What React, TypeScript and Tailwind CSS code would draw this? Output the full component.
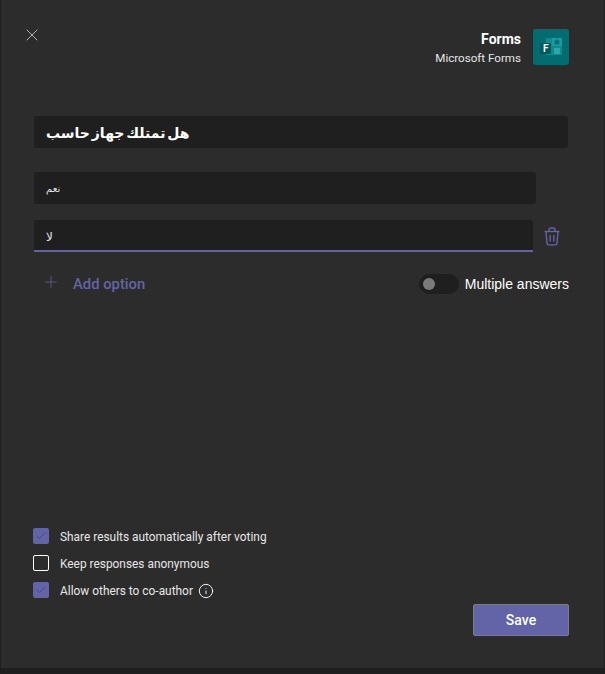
import React from "react";
import { X, Plus, Info, Check } from "lucide-react";

function CheckRow({ checked, label, info }: { checked: boolean; label: string; info?: boolean }) {
  return (
    <div className="flex items-center h-[16px] gap-[11px]">
      {checked ? (
        <div className="w-[16px] h-[16px] rounded-[2px] bg-[#6264a7] flex items-center justify-center">
          <Check size={12} strokeWidth={1.3} className="text-[#3a3b6b]" />
        </div>
      ) : (
        <div className="w-[16px] h-[16px] rounded-[2px] border border-white" />
      )}
      <span className="text-[11.9px] text-[#e6e6e6] font-['Roboto',sans-serif] leading-none pt-[4px]">{label}</span>
      {info && <Info size={16} strokeWidth={1.4} className="text-white -ml-[6px] mt-[1px]" />}
    </div>
  );
}

export default function App() {
  return (
    <div className="w-[605px] h-[674px] bg-[#1f1f1f] overflow-hidden">
      <div className="h-[668px] ml-px mr-px bg-[#2d2c2c] flex flex-col pl-[32px] pr-[35px] font-['Roboto',sans-serif]">
        <header className="flex justify-between items-start pt-[29px] h-[116px]">
          <X size={20} strokeWidth={0.9} className="text-[#e0e0e0] -ml-[11px] -mt-[4px]" />
          <div className="flex gap-[12px]">
            <div className="flex flex-col items-end text-white pt-[2px]">
              <span className="text-[14px] leading-[16px] font-bold">Forms</span>
              <span className="text-[11.6px] leading-[16px] mt-[3px] text-[#e6e6e6]">Microsoft Forms</span>
            </div>
            <div className="w-[36px] h-[36px] rounded-[3px] bg-[#036c70] flex items-center justify-center">
              <svg width="22" height="18" viewBox="0 0 22 18">
                <rect x="6" y="0" width="16" height="17" rx="1" fill="#0f8a8d" />
                <rect x="12" y="0" width="10" height="8" fill="#1c9a9f" />
                <circle cx="17" cy="4" r="2.6" fill="#0b7377" />
                <rect x="14" y="10" width="6" height="6" fill="#2aa9ad" />
                <rect x="0" y="5" width="11" height="11" rx="1" fill="#04585b" />
                <text x="3" y="14" fontSize="10" fontWeight="700" fill="#fff" fontFamily="Roboto, sans-serif">F</text>
              </svg>
            </div>
          </div>
        </header>

        <div className="h-[32px] w-[534px] ml-px rounded-[3px] bg-[#1f1f1f] flex items-center pl-[12px] pt-[2px]">
          <span dir="rtl" className="text-[14px] [word-spacing:-3px] font-bold text-white font-['DejaVu_Sans',sans-serif]">هل تمتلك جهاز حاسب</span>
        </div>

        <div className="h-[32px] w-[502px] ml-px mt-[24px] rounded-[3px] bg-[#1f1f1f] flex items-center pl-[12px]">
          <span dir="rtl" className="text-[10px] text-[#e6e6e6] font-['DejaVu_Sans',sans-serif]">نعم</span>
        </div>

        <div className="flex items-center mt-[16px] ml-px">
          <div className="h-[32px] w-[499px] rounded-t-[3px] bg-[#1f1f1f] border-b-2 border-[#6264a7] flex items-center pl-[12px] pt-[3px]">
            <span dir="rtl" className="text-[12px] text-[#e6e6e6] font-['DejaVu_Sans',sans-serif]">لا</span>
          </div>
          <svg width="18" height="19" viewBox="0 0 18 19" fill="none" stroke="#6264a7" strokeWidth="1.4" className="ml-[10px]">
            <path d="M1.5 4.5h15" />
            <path d="M6 4.5V2.8A1.8 1.8 0 0 1 7.8 1h2.4A1.8 1.8 0 0 1 12 2.8v1.7" />
            <path d="M3 4.5l1 12a1.6 1.6 0 0 0 1.6 1.4h6.8a1.6 1.6 0 0 0 1.6-1.4l1-12" />
            <path d="M7.2 8v6.5M10.8 8v6.5" />
          </svg>
        </div>

        <div className="flex items-center justify-between mt-[22px] h-[20px]">
          <div className="flex items-center ml-[9px]">
            <Plus size={18} strokeWidth={1} className="text-[#6264a7] -mt-[4px]" />
            <span className="ml-[13px] text-[14.8px] font-medium text-[#6264a7]">Add option</span>
          </div>
          <div className="flex items-center">
            <div className="w-[40px] h-[20px] rounded-full bg-[#1f1f1f] flex items-center pl-[4px]">
              <div className="w-[12px] h-[12px] rounded-full bg-[#7a7a7a]" />
            </div>
            <span className="ml-[6px] text-[14px] text-white font-['Liberation_Sans',sans-serif]">Multiple answers</span>
          </div>
        </div>

        <div className="flex-1" />

        <div className="flex flex-col gap-[11px] mb-[6px]">
          <CheckRow checked label="Share results automatically after voting" />
          <CheckRow checked={false} label="Keep responses anonymous" />
          <CheckRow checked label="Allow others to co-author" info />
        </div>

        <div className="flex justify-end mb-[32px]">
          <button className="w-[96px] h-[32px] rounded-[2px] bg-[#6264a7] border border-[#7b7b85] text-white text-[14px] font-medium">
            Save
          </button>
        </div>
      </div>
    </div>
  );
}
